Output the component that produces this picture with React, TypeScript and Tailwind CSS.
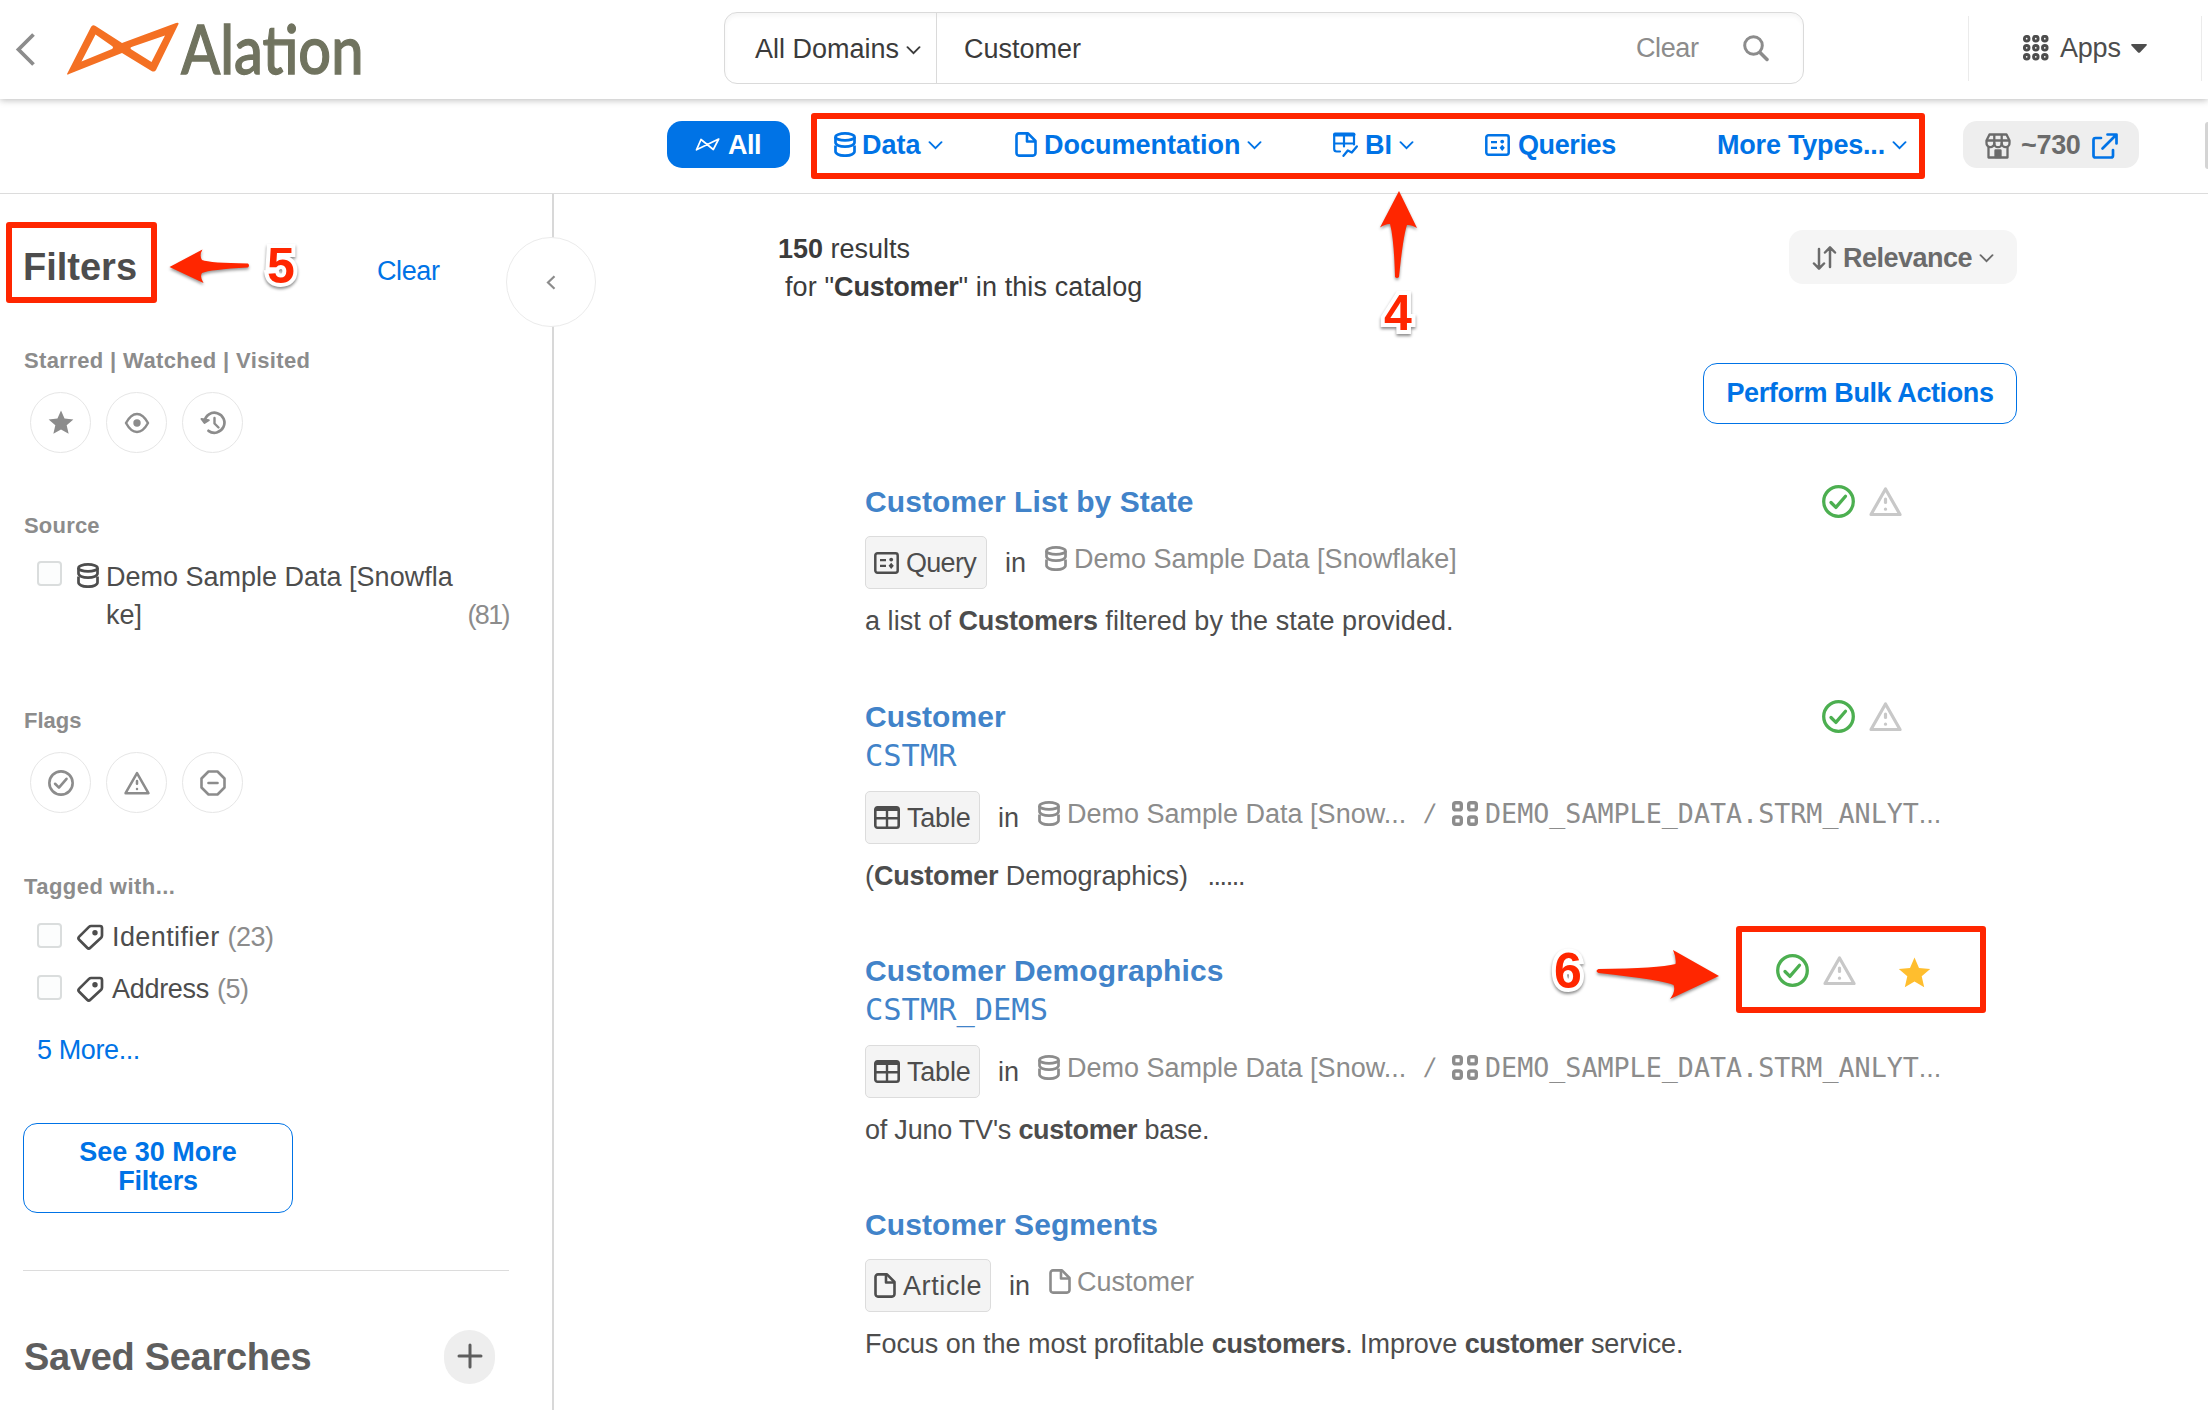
import type { ReactNode } from "react";

type IconProps = { className?: string };

function DbIcon({ className }: IconProps) {
  return (
    <svg className={className} width="22" height="25" viewBox="0 0 22 25" fill="none" stroke="currentColor" strokeWidth="2.7">
      <ellipse cx="11" cy="4.900" rx="9.500" ry="3.500" />
      <path d="M1.500 5v5.600c0 2.200 4.100 4 9.500 4s9.500-1.800 9.500-4V5" />
      <path d="M1.500 13.500v6c0 2.300 4 4.200 9.500 4.200s9.500-1.900 9.500-4.200v-6" />
    </svg>
  );
}

function DocIcon({ className }: IconProps) {
  return (
    <svg className={className} width="22" height="25" viewBox="0 0 22 25" fill="none" stroke="currentColor" strokeWidth="2.6" strokeLinejoin="round">
      <path d="M13 1.400H4A2.500 2.500 0 0 0 1.500 3.900v17.200A2.500 2.500 0 0 0 4 23.600h14a2.500 2.500 0 0 0 2.500-2.500V9z" />
      <path d="M12 1.400V9.500h8.400" />
    </svg>
  );
}

function BiIcon({ className }: IconProps) {
  return (
    <svg className={className} width="25" height="25" viewBox="0 0 25 25" fill="none" stroke="currentColor" strokeWidth="2.2" strokeLinecap="round" strokeLinejoin="round">
      <path d="M2 2.500h18.500" strokeWidth="4" />
      <path d="M1.200 3v14a2.500 2.500 0 0 0 2.500 2.500H7M21 3v9.500M1.200 11.500H20M11 4v10.500" />
      <path d="M10.500 23.800l4.300-5.300 4 2 5-6" strokeWidth="2.300" />
    </svg>
  );
}

function QueryIcon({ className }: IconProps) {
  return (
    <svg className={className} width="25" height="22" viewBox="0 0 25 22" fill="none" stroke="currentColor">
      <rect x="1.300" y="1.300" width="22.400" height="19.400" rx="2.200" strokeWidth="2.500" />
      <path d="M6 8.200h6M6 13.800h6" strokeWidth="2.300" />
      <circle cx="17.200" cy="7.600" r="1.900" fill="currentColor" stroke="none" />
      <path d="M17.200 10.800l2.600 3-2.600 3.200-2.600-3.200z" fill="currentColor" stroke="none" />
    </svg>
  );
}

function TableIcon({ className }: IconProps) {
  return (
    <svg className={className} width="26" height="23" viewBox="0 0 26 23" fill="none" stroke="currentColor" strokeWidth="2.600">
      <rect x="1.300" y="1.300" width="23.400" height="20.400" rx="2.200" />
      <path d="M1 3h24" strokeWidth="4" />
      <path d="M1 12.200h24M13 4v18" strokeWidth="2.400" />
    </svg>
  );
}

function SchemaIcon({ className }: IconProps) {
  return (
    <svg className={className} width="26" height="25" viewBox="0 0 26 25" fill="none" stroke="currentColor" strokeWidth="3.400">
      <rect x="1.700" y="1.700" width="7.600" height="7.200" rx="2" />
      <rect x="16.700" y="1.700" width="7.600" height="7.200" rx="2" />
      <rect x="1.700" y="16" width="7.600" height="7.200" rx="2" />
      <rect x="16.700" y="16" width="7.600" height="7.200" rx="2" />
    </svg>
  );
}

function TagIcon() {
  return (
    <svg width="27" height="26" viewBox="0 0 27 26" fill="none" stroke="currentColor" strokeWidth="2.700" strokeLinejoin="round">
      <path d="M14.200 2h8.800a2 2 0 0 1 2 2v7.600a3 3 0 0 1-.9 2.100L13.300 23.700a2.200 2.200 0 0 1-3.100 0L2.200 15.700a2.200 2.200 0 0 1 0-3.100L12 2.900A3 3 0 0 1 14.200 2z" />
      <circle cx="18" cy="8.700" r="2.700" fill="currentColor" stroke="none" />
    </svg>
  );
}

function Chevron({ className }: IconProps) {
  return (
    <svg className={className} width="15" height="9" viewBox="0 0 15 9" fill="none" stroke="currentColor" strokeWidth="1.900" strokeLinecap="round">
      <path d="M1.500 1.200l6 6 6-6" />
    </svg>
  );
}

function BowTie({ className }: IconProps) {
  return (
    <svg className={className} width="25" height="13" viewBox="0 0 25 13" fill="none" stroke="currentColor" strokeWidth="1.700" strokeLinejoin="round">
      <path d="M1.500 11.800L6 1.500l12.300 10L23.700 1z" />
    </svg>
  );
}

function CheckCircle({ size }: { size: number }) {
  return (
    <svg width={size} height={size} viewBox="0 0 33 33" fill="none" stroke="currentColor" strokeWidth="3.300" strokeLinecap="round" strokeLinejoin="round">
      <circle cx="16.500" cy="16.500" r="14.800" />
      <path d="M9 17.500l4.900 4.900 9.600-11.200" />
    </svg>
  );
}

function WarnIcon({ size }: { size: number }) {
  return (
    <svg width={size} height={size} viewBox="0 0 33 33" fill="none" stroke="currentColor" strokeWidth="3.200" strokeLinecap="round" strokeLinejoin="round">
      <path d="M16.500 4L31 29.500H2z" />
      <path d="M16.500 14v3.500" />
      <path d="M16.500 24v.2" />
    </svg>
  );
}

function StarIcon({ size }: { size: number }) {
  return (
    <svg width={size} height={size} viewBox="0 0 33 33" fill="currentColor">
      <path d="M16.500.5L21 10.900l11.200 1-8.500 7.400 2.500 11-9.700-5.700-9.700 5.700 2.500-11-8.500-7.400 11.200-1z" />
    </svg>
  );
}

function RoundButton({ children }: { children: ReactNode }) {
  return (
    <button className="flex size-[61px] items-center justify-center rounded-full border border-[#e6e6e6] bg-white text-[#8c8c8c]">
      {children}
    </button>
  );
}

function Caption({ children, className }: { children: ReactNode; className: string }) {
  return <h3 className={`ml-[24px] h-[30px] text-[22px] leading-[30px] font-bold text-[#8c8c8c] ${className}`}>{children}</h3>;
}

function Checkbox() {
  return <span className="block size-[25px] shrink-0 rounded-[4px] border-2 border-[#dadddd] bg-[#fcfdfd]" />;
}

function Callout({ children, className }: { children: ReactNode; className: string }) {
  return (
    <span
      className={`absolute text-[50px] leading-[50px] font-bold text-[#ff2600] [-webkit-text-stroke:8px_white] [filter:drop-shadow(0_2px_1.5px_rgba(0,0,0,0.45))] [paint-order:stroke_fill] ${className}`}
    >
      {children}
    </span>
  );
}

type Result = {
  title: string;
  sub?: string;
  kind: "Query" | "Table" | "Article";
  starred?: boolean;
  flags: boolean;
  tracking: string;
  desc: ReactNode;
};

const results: Result[] = [
  {
    title: "Customer List by State",
    kind: "Query",
    flags: true,
    tracking: "tracking-[0.05px]",
    desc: (
      <>
        a list of <b className="tracking-[-0.200px]">Customers</b> filtered by the state provided.
      </>
    ),
  },
  {
    title: "Customer",
    sub: "CSTMR",
    kind: "Table",
    flags: true,
    tracking: "tracking-[-0.070px]",
    desc: (
      <>
        (<b className="tracking-[-0.200px]">Customer</b> Demographics) <span className="ml-[12px] tracking-[-1.400px]">......</span>
      </>
    ),
  },
  {
    title: "Customer Demographics",
    sub: "CSTMR_DEMS",
    kind: "Table",
    flags: true,
    starred: true,
    tracking: "tracking-[-0.220px]",
    desc: (
      <>
        of Juno TV's <b className="tracking-[-0.350px]">customer</b> base.
      </>
    ),
  },
  {
    title: "Customer Segments",
    kind: "Article",
    flags: false,
    tracking: "tracking-[-0.050px]",
    desc: (
      <>
        Focus on the most profitable <b className="tracking-[-0.350px]">customers</b>. Improve <b className="tracking-[-0.350px]">customer</b> service.
      </>
    ),
  },
];

function Kind({ kind }: { kind: Result["kind"] }) {
  const box = "flex h-[53px] items-center rounded-[5px] border border-[#dcdcdc] bg-[#f4f4f4] pl-[8px] text-[#4d4d4d]";
  if (kind === "Query")
    return (
      <span className={`${box} w-[122px]`}>
        <QueryIcon className="mr-[7px]" />
        <span className="tracking-[-0.700px]">Query</span>
      </span>
    );
  if (kind === "Table")
    return (
      <span className={`${box} w-[115px]`}>
        <TableIcon className="mr-[7px]" />
        <span className="tracking-[-0.200px]">Table</span>
      </span>
    );
  return (
    <span className={`${box} w-[126px]`}>
      <DocIcon className="mr-[7px]" />
      <span className="tracking-[0.600px]">Article</span>
    </span>
  );
}

function Source({ kind }: { kind: Result["kind"] }) {
  if (kind === "Query")
    return (
      <>
        <DbIcon className="mr-[7px]" />
        Demo Sample Data [Snowflake]
      </>
    );
  if (kind === "Article")
    return (
      <>
        <DocIcon className="mr-[6px]" />
        Customer
      </>
    );
  return (
    <>
      <DbIcon className="mr-[7px]" />
      <span className="w-[359px]">Demo Sample Data [Snow...</span>
      <span className="w-[26px] -skew-x-12">/</span>
      <SchemaIcon className="mr-[7px]" />
      <span className="font-['DejaVu_Sans_Mono',monospace] text-[26.700px]">DEMO_SAMPLE_DATA.STRM_ANLYT</span>
      <span>...</span>
    </>
  );
}

function ResultItem({ item }: { item: Result }) {
  return (
    <article className="mb-[55px] w-[1120px] first:mb-[56px]">
      <div className="flex h-[40px] items-center justify-between">
        <h2 className="text-[30px] leading-[40px] font-bold tracking-[0.080px] text-[#4183c9]">{item.title}</h2>
        {item.flags && (
          <div className={item.starred ? "relative mr-[54px] flex items-center" : "mr-[83px] flex items-center"}>
            <span className="-mt-[2px] flex gap-[14px]">
              <span className="text-[#4caf50]">
                <CheckCircle size={33} />
              </span>
              <span className="text-[#c8c8c8]">
                <WarnIcon size={33} />
              </span>
            </span>
            {item.starred && (
              <>
                <span className="mt-[5px] ml-[42px] text-[#ffbe2e]">
                  <StarIcon size={33} />
                </span>
                <span className="absolute -top-[26px] -left-[40px] h-[87px] w-[250px] rounded-[3px] border-[6px] border-[#ff2600]" />
              </>
            )}
          </div>
        )}
      </div>
      {item.sub && (
        <div className="mb-[16px] h-[38px] font-['DejaVu_Sans_Mono',monospace] text-[30.400px] leading-[38px] text-[#4183c9]">{item.sub}</div>
      )}
      <div className="mt-[14px] flex h-[53px] items-center">
        <Kind kind={item.kind} />
        <span className="mr-[19px] ml-[18px] text-[#4d4d4d]">in</span>
        <span className="-mt-[8px] flex items-center whitespace-nowrap text-[#8c8c8c]">
          <Source kind={item.kind} />
        </span>
      </div>
      <p className={`mt-[12px] h-[40px] leading-[40px] text-[#4d4d4d] ${item.tracking}`}>{item.desc}</p>
    </article>
  );
}

function Header() {
  return (
    <header className="relative z-10 flex h-[99px] shrink-0 bg-white shadow-[0_1px_7px_rgba(0,0,0,0.28)]">
      <svg className="mt-[32px] ml-[15px]" width="22" height="35" viewBox="0 0 22 35" fill="none" stroke="#8c8c8c" strokeWidth="3.800">
        <path d="M18.500 2.500L3.500 17.500l15 15" />
      </svg>
      <svg className="mt-[22px] ml-[29px]" width="114" height="54" viewBox="66 22 114 54" fill="#f47023" fillRule="evenodd">
        <path d="M67 74L91 27q1.500-3 4.500-1L122 43l54-20q3-1 2.500 1L156 70q-1.500 2.500-4.500 1L122 53 69 74q-2 1-2 0zM95.500 34.500L81.500 61.500 112 49q2-1.200 0-3zM165 35.500L131.500 47q-2 1 0 2.500l20 12.500z" />
      </svg>
      <div className="mt-[7px] w-[544px] pl-px">
        <span className="block origin-left scale-x-[0.848] font-['Lato',sans-serif] text-[68px] leading-[81px] font-medium text-[#70735f] [-webkit-text-stroke:1.300px_#70735f]">
          Alation
        </span>
      </div>
      <div className="mt-[12px] flex h-[72px] w-[1080px] items-center rounded-[13px] border border-[#dadada] text-[#3b3b3b] shadow-[inset_0_3px_4px_rgba(0,0,0,0.04)]">
        <div className="flex h-full w-[212px] items-center border-r border-[#dadada] pt-[2px] pl-[30px]">
          <span>All Domains</span>
          <Chevron className="mt-[2px] ml-[7px]" />
        </div>
        <span className="mt-[2px] ml-[27px] w-[672px]">Customer</span>
        <span className="tracking-[-0.400px] text-[#8c8c8c]">Clear</span>
        <svg className="ml-[44px]" width="26" height="27" viewBox="0 0 26 27" fill="none" stroke="#8c8c8c" strokeWidth="3" strokeLinecap="round">
          <circle cx="10.500" cy="10.500" r="8.800" />
          <path d="M17 17.500l7 7" strokeWidth="3.500" />
        </svg>
      </div>
      <div className="mt-[16px] ml-[164px] flex h-[65px] w-[234px] items-center border-x border-[#ebebeb] pl-[54px] text-[#4d4d4d]">
        <svg className="-mt-[2px]" width="26" height="26" viewBox="0 0 26 26" fill="none" stroke="#4d4d4d" strokeWidth="2.900">
          {[3.700, 12.800, 21.800].map((y) =>
            [3.700, 12.800, 21.800].map((x) => <circle key={`${x}-${y}`} cx={x} cy={y} r="2.300" />),
          )}
        </svg>
        <span className="-mt-px ml-[11px] tracking-[-0.200px]">Apps</span>
        <svg className="-mt-px ml-[10px]" width="16" height="9" viewBox="0 0 16 9" fill="#4d4d4d">
          <path d="M1 0h14q1.500.300.500 1.500L9.200 8.200q-1.200 1-2.400 0L.5 1.500Q-.4.300 1 0z" />
        </svg>
      </div>
    </header>
  );
}

function TypeBar() {
  return (
    <nav className="relative flex h-[95px] shrink-0 items-center border-b border-[#dcdcdc] font-bold text-[#0073e6]">
      <button className="mt-[-3px] ml-[667px] flex h-[47px] w-[123px] items-center rounded-[15px] bg-[#0073e6] pl-[28px] text-white">
        <BowTie className="mr-[8px]" />
        <span className="tracking-[-0.500px]">All</span>
      </button>
      <div className="mt-[-3px] ml-[43px] flex items-center">
        <span className="flex w-[181px] items-center pl-px">
          <DbIcon className="mr-[6px]" />
          Data
          <Chevron className="mt-[2px] ml-[7px]" />
        </span>
        <span className="flex w-[319px] items-center pl-px">
          <DocIcon className="mr-[7px]" />
          Documentation
          <Chevron className="mt-[2px] ml-[6px]" />
        </span>
        <span className="flex w-[152px] items-center">
          <BiIcon className="mr-[7px]" />
          BI
          <Chevron className="mt-[2px] ml-[7px]" />
        </span>
        <span className="flex w-[232px] items-center">
          <QueryIcon className="mr-[8px]" />
          <span className="tracking-[-0.400px]">Queries</span>
        </span>
        <span className="flex items-center">
          <span className="tracking-[-0.200px]">More Types...</span>
          <Chevron className="mt-[2px] ml-[7px]" />
        </span>
      </div>
      <button className="mt-[-3px] ml-[56px] flex h-[47px] w-[176px] items-center rounded-[14px] bg-[#eeeeee] pl-[22px] text-[#6b6b6b]">
        <svg className="mt-[3px]" width="26" height="26" viewBox="0 0 26 26" fill="none" stroke="currentColor" strokeWidth="2.300" strokeLinejoin="round">
          <path d="M4.500 1.500h17l3 6v2.500a3.900 3.900 0 0 1-7.800.500 3.700 3.700 0 0 1-7.400 0 3.900 3.900 0 0 1-7.800-.5V7.500z" />
          <path d="M2 7.500h22M9.300 1.500v10M16.700 1.500v10M3.500 14v10.500h19V14" />
          <path d="M10.500 24v-6.500h5V24z" fill="currentColor" />
        </svg>
        <span className="ml-[10px] tracking-[-0.300px]">~730</span>
        <svg className="mt-[3px] ml-[11px] text-[#0073e6]" width="26" height="26" viewBox="0 0 26 26" fill="none" stroke="currentColor" strokeWidth="2.700" strokeLinecap="round" strokeLinejoin="round">
          <path d="M9 5H3.500A2 2 0 0 0 1.500 7v15.500a2 2 0 0 0 2 2H19a2 2 0 0 0 2-2V17" />
          <path d="M15.500 1.500h9v9M24 2L10.500 15.500" />
        </svg>
      </button>
      <div className="absolute top-[23px] right-0 h-[47px] w-[3px] rounded-l-[3px] bg-[#d4d4d4]" />
      <div className="absolute top-[14px] left-[811px] h-[66px] w-[1114px] rounded-[3px] border-[6px] border-[#ff2600]" />
    </nav>
  );
}

function Sidebar() {
  return (
    <aside className="relative flex w-[554px] shrink-0 flex-col border-r-2 border-[#d8d8d8] text-[#4d4d4d]">
      <div className="mt-[53px] flex h-[40px] items-center">
        <h1 className="ml-[23px] w-[354px] text-[38px] leading-[40px] font-bold">Filters</h1>
        <span className="mt-[7px] tracking-[-0.400px] text-[#0073e6]">Clear</span>
      </div>
      <button className="absolute top-[43px] left-[506px] flex size-[90px] items-center justify-center rounded-full border border-[#ebebeb] bg-white">
        <svg width="10" height="15" viewBox="0 0 10 15" fill="none" stroke="#8c8c8c" strokeWidth="2.200">
          <path d="M8.500 1.200L2 7.500l6.500 6.300" />
        </svg>
      </button>

      <Caption className="mt-[59px] tracking-[0.370px]">Starred | Watched | Visited</Caption>
      <div className="mt-[16px] ml-[30px] flex gap-[15px]">
        <RoundButton>
          <StarIcon size={26} />
        </RoundButton>
        <RoundButton>
          <svg width="26" height="22" viewBox="0 0 26 22" fill="none" stroke="currentColor" strokeWidth="2.500" strokeLinejoin="round">
            <path d="M2 11c3-5.500 6.500-9 11-9s8 3.500 11 9c-3 5.500-6.500 9-11 9s-8-3.500-11-9z" />
            <circle cx="13" cy="11" r="3.700" fill="currentColor" stroke="none" />
          </svg>
        </RoundButton>
        <RoundButton>
          <svg width="26" height="24" viewBox="0 0 26 24" fill="none" stroke="currentColor" strokeWidth="2.700" strokeLinecap="round" strokeLinejoin="round">
            <path d="M4.500 10.500A10 10 0 1 1 8.500 19.800" />
            <path d="M1.500 8l3 4 4.300-2.800z" fill="currentColor" strokeWidth="2" />
            <path d="M14.500 7v5.500l4 4" strokeWidth="2.400" />
          </svg>
        </RoundButton>
      </div>

      <Caption className="mt-[58px] tracking-[0.200px]">Source</Caption>
      <div className="mt-[17px] ml-[37px] flex">
        <div className="mt-[3px]">
          <Checkbox />
        </div>
        <DbIcon className="mt-[5px] ml-[15px]" />
        <div className="ml-[7px] leading-[38px]">
          Demo Sample Data [Snowfla
          <br />
          ke]
        </div>
      </div>
      <div className="-mt-[38px] h-[38px] pr-[43px] text-right leading-[38px] tracking-[-1.600px] text-[#8c8c8c]">(81)</div>

      <Caption className="mt-[72px]">Flags</Caption>
      <div className="mt-[16px] ml-[30px] flex gap-[15px]">
        <RoundButton>
          <CheckCircle size={26} />
        </RoundButton>
        <RoundButton>
          <WarnIcon size={26} />
        </RoundButton>
        <RoundButton>
          <svg width="26" height="26" viewBox="0 0 26 26" fill="none" stroke="currentColor" strokeWidth="2.600" strokeLinejoin="round" strokeLinecap="round">
            <path d="M8.500 1.500h9l7 7v9l-7 7h-9l-7-7v-9z" />
            <path d="M8.500 13h9" />
          </svg>
        </RoundButton>
      </div>

      <Caption className="mt-[59px] tracking-[0.450px]">Tagged with...</Caption>
      <div className="mt-[16px] ml-[37px] flex h-[38px] items-center">
        <span className="-mt-[4px]">
          <Checkbox />
        </span>
        <span className="mr-[8px] ml-[15px]">
          <TagIcon />
        </span>
        <span className="tracking-[0.400px]">Identifier</span>
        <span className="ml-[8px] tracking-[-0.500px] text-[#8c8c8c]">(23)</span>
      </div>
      <div className="mt-[14px] ml-[37px] flex h-[38px] items-center">
        <span className="-mt-[4px]">
          <Checkbox />
        </span>
        <span className="mr-[8px] ml-[15px]">
          <TagIcon />
        </span>
        <span className="tracking-[-0.300px]">Address</span>
        <span className="ml-[8px] tracking-[-0.500px] text-[#8c8c8c]">(5)</span>
      </div>
      <span className="mt-[23px] ml-[37px] h-[38px] leading-[38px] tracking-[-0.400px] text-[#0073e6]">5 More...</span>

      <button className="mt-[54px] ml-[23px] h-[90px] w-[270px] rounded-[14px] border border-[#0073e6] px-[40px] pb-[2px] leading-[29px] font-bold text-[#0073e6]">
        See 30 More <span className="tracking-[-0.200px]">Filters</span>
      </button>

      <div className="mt-[57px] ml-[23px] w-[486px] border-t border-[#dcdcdc]" />
      <div className="mt-[59px] ml-[24px] flex items-center">
        <h1 className="w-[420px] text-[38px] leading-[54px] font-bold tracking-[-0.300px] text-[#5e5e5e]">Saved Searches</h1>
        <button className="flex h-[54px] w-[51px] items-center justify-center rounded-full bg-[#eeeeee]">
          <svg className="-mt-[3px]" width="26" height="26" viewBox="0 0 26 26" stroke="#5e5e5e" strokeWidth="3" strokeLinecap="round">
            <path d="M13 2v22M2 13h22" />
          </svg>
        </button>
      </div>

      <span className="absolute top-[28px] left-[6px] h-[81px] w-[151px] rounded-[3px] border-[6px] border-[#ff2600]" />
      <svg className="absolute top-[54px] left-[166px] overflow-visible [filter:drop-shadow(0_2px_1.5px_rgba(0,0,0,0.4))]" width="88" height="40" viewBox="166 248 88 40" fill="#ff2600">
        <path d="M169.500 267L202.500 249.500q-3.500 6-.5 10.500 8 3 46 3.500 2 2 0 4-38 2-46 5.500-2.500 4 1.500 10z" />
      </svg>
      <Callout className="top-[47px] left-[267px]">5</Callout>
    </aside>
  );
}

export default function App() {
  return (
    <div className="flex h-[1410px] w-[2208px] flex-col overflow-hidden bg-white font-['Liberation_Sans',Arial,sans-serif] text-[27px] leading-[38px]">
      <Header />
      <TypeBar />
      <div className="flex min-h-0 flex-1">
        <Sidebar />
        <main className="relative flex-1">
          <div className="flex h-[90px] items-start justify-between pt-[36px] pr-[191px] pl-[224px] text-[#3b3b3b]">
            <div>
              <div>
                <b>150</b> results
              </div>
              <div className="pl-[7px] tracking-[0.100px]">
                for "<b className="tracking-[-0.200px]">Customer</b>" in this catalog
              </div>
            </div>
            <button className="flex h-[54px] w-[228px] items-center rounded-[14px] bg-[#f5f5f5] pt-px pl-[23px] font-bold text-[#6b6b6b]">
              <svg className="mr-[6px]" width="25" height="26" viewBox="0 0 25 26" fill="none" stroke="currentColor" strokeWidth="2.500" strokeLinecap="round" strokeLinejoin="round">
                <path d="M7 4v19M2 18.500l5 5.200 5-5.200M18 22V3M13 7.500l5-5.200 5 5.200" />
              </svg>
              <span className="tracking-[-0.500px]">Relevance</span>
              <Chevron className="mt-[1px] ml-[7px]" />
            </button>
          </div>
          <div className="mt-[79px] flex justify-end pr-[191px]">
            <button className="h-[61px] w-[314px] rounded-[14px] border border-[#0073e6] pb-[2px] font-bold tracking-[-0.400px] text-[#0073e6]">
              Perform Bulk Actions
            </button>
          </div>
          <section className="mt-[58px] ml-[311px]">
            {results.map((r) => (
              <ResultItem key={r.title} item={r} />
            ))}
          </section>

          <svg className="absolute -top-[6px] left-[822px] overflow-visible [filter:drop-shadow(0_2px_1.5px_rgba(0,0,0,0.4))]" width="46" height="94" viewBox="1376 188 46 94" fill="#ff2600">
            <path d="M1399 191L1417 228q-6-3.500-10-3-4 12-8 52-2 2-4 0-1-38-5-53-4-.5-10 3.500z" />
          </svg>
          <Callout className="top-[94px] left-[830px]">4</Callout>
          <svg className="absolute top-[754px] left-[1040px] overflow-visible [filter:drop-shadow(0_2px_1.5px_rgba(0,0,0,0.4))]" width="128" height="56" viewBox="1594 948 128 56" fill="#ff2600">
            <path d="M1719 976L1670 999q6-8 3.500-14-10-5-75-12-4-2 0-4 60-.5 77-5 1-6-2.500-14z" />
          </svg>
          <Callout className="top-[752px] left-[1000px]">6</Callout>
        </main>
      </div>
    </div>
  );
}
